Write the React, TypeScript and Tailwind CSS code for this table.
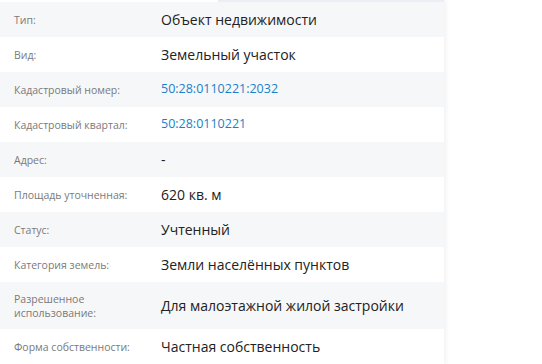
import React from 'react';

type Row = { label: string; value: string; link?: boolean; tall?: boolean };

const rows: Row[] = [
  { label: 'Тип:', value: 'Объект недвижимости' },
  { label: 'Вид:', value: 'Земельный участок' },
  { label: 'Кадастровый номер:', value: '50:28:0110221:2032', link: true },
  { label: 'Кадастровый квартал:', value: '50:28:0110221', link: true },
  { label: 'Адрес:', value: '-' },
  { label: 'Площадь уточненная:', value: '620 кв. м' },
  { label: 'Статус:', value: 'Учтенный' },
  { label: 'Категория земель:', value: 'Земли населённых пунктов' },
  { label: 'Разрешенное использование:', value: 'Для малоэтажной жилой застройки', tall: true },
  { label: 'Форма собственности:', value: 'Частная собственность' },
];

export default function App() {
  return (
    <div className="w-[542px] h-[364px] bg-white overflow-hidden font-['Open_Sans',sans-serif]">
      <div className="w-[444px] shadow-[2px_0_5px_rgba(0,0,0,0.06)]">
        {/* thin strip above the table */}
        <div className="flex h-[2px]">
          <div className="w-[218px]" />
          <div className="flex-1 bg-[#eceef5]" />
        </div>
        {rows.map((r, i) => (
          <div
            key={r.label}
            className={`flex items-center ${r.tall ? 'h-[47px]' : 'h-[35px]'} ${i % 2 === 0 ? 'bg-[#f6f7f9]' : 'bg-white'}`}
          >
            <div className="w-[160px] pl-[14px] pr-2 text-[10.5px] leading-[14px] text-[#7a7a7a]">
              {r.tall ? (
                <>
                  Разрешенное
                  <br />
                  использование:
                </>
              ) : (
                r.label
              )}
            </div>
            <div
              className={`flex-1 pl-px ${r.link ? 'text-[12.5px] text-[#1a7fc8]' : 'text-[14px] text-[#222]'}`}
            >
              {r.value}
            </div>
          </div>
        ))}
      </div>
    </div>
  );
}
